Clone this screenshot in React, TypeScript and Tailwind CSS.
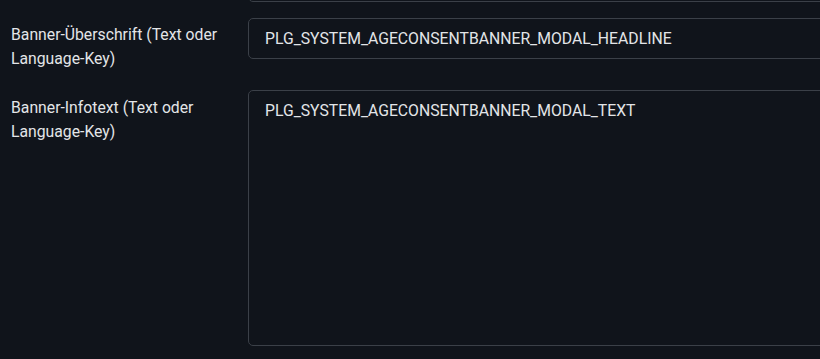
import React from 'react';

const rowLabel = 'w-[248px] shrink-0 pl-[11px] pr-4 text-[15.75px] leading-6 text-[#e3e5e8]';
const field =
  'block w-[620px] shrink-0 rounded-[5px] border border-[#3b4048] bg-[#10141b] px-4 text-[15.75px] text-[#e3e5e8] outline-none';

export default function App() {
  return (
    <div
      className="relative h-[359px] w-[820px] overflow-hidden bg-[#10141b]"
      style={{ fontFamily: 'Roboto, "Liberation Sans", sans-serif' }}
    >
      {/* previous row, only its bottom edge is visible */}
      <div className="flex">
        <div className={rowLabel} />
        <div className={field + ' mt-[-40px] h-[42px]'} />
      </div>

      <div className="mt-[16px] flex">
        <div className={rowLabel + ' pt-[5px]'}>Banner-Überschrift (Text oder Language-Key)</div>
        <div className={field + ' flex h-[41px] items-center pt-[1px]'}>PLG_SYSTEM_AGECONSENTBANNER_MODAL_HEADLINE</div>
      </div>

      <div className="mt-[19px] flex">
        <div className={rowLabel + ' pt-[6px]'}>Banner-Infotext (Text oder Language-Key)</div>
        <div className={field + ' h-[256px] pt-[8px] leading-6'}>PLG_SYSTEM_AGECONSENTBANNER_MODAL_TEXT</div>
      </div>
    </div>
  );
}
